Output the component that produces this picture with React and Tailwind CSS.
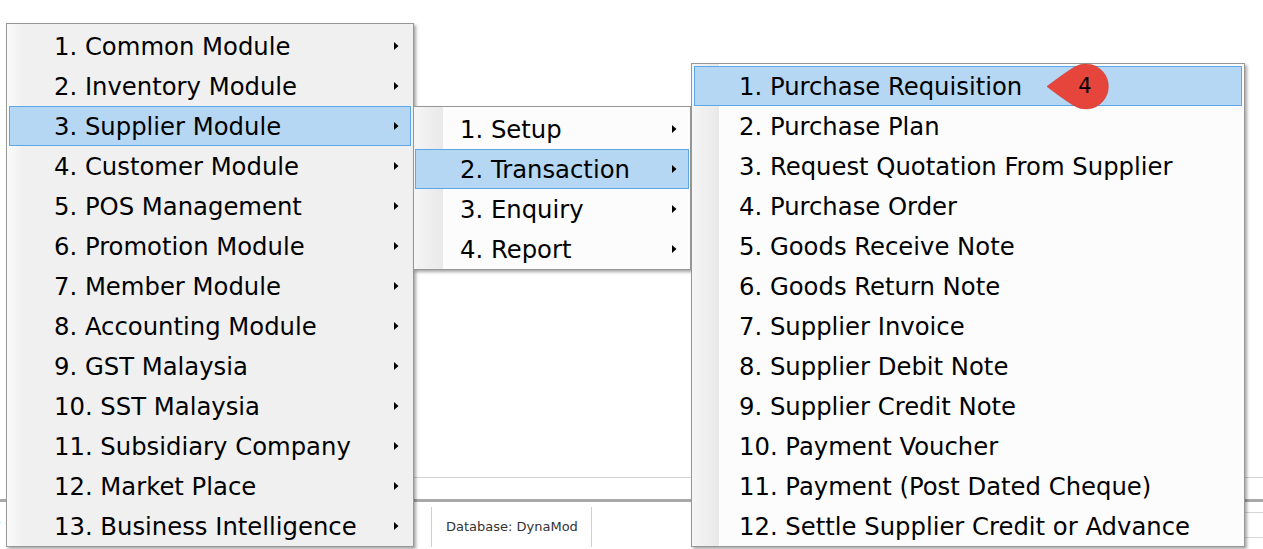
const mainItems = [
  '1. Common Module',
  '2. Inventory Module',
  '3. Supplier Module',
  '4. Customer Module',
  '5. POS Management',
  '6. Promotion Module',
  '7. Member Module',
  '8. Accounting Module',
  '9. GST Malaysia',
  '10. SST Malaysia',
  '11. Subsidiary Company',
  '12. Market Place',
  '13. Business Intelligence',
]

const supplierItems = ['1. Setup', '2. Transaction', '3. Enquiry', '4. Report']

const transactionItems = [
  '1. Purchase Requisition',
  '2. Purchase Plan',
  '3. Request Quotation From Supplier',
  '4. Purchase Order',
  '5. Goods Receive Note',
  '6. Goods Return Note',
  '7. Supplier Invoice',
  '8. Supplier Debit Note',
  '9. Supplier Credit Note',
  '10. Payment Voucher',
  '11. Payment (Post Dated Cheque)',
  '12. Settle Supplier Credit or Advance',
]

function Arrow() {
  return (
    <svg width="5" height="8" viewBox="0 0 5 8" className="shrink-0">
      <polygon points="0,0 4.5,4 0,8" fill="#000" />
    </svg>
  )
}

function Item({ label, active, arrow, mx }) {
  return (
    <div
      className={`h-[40px] flex items-center justify-between pl-[44px] pr-[11px] border ${mx} ${
        active ? 'bg-[#b5d7f3] border-[#5ea7e6]' : 'border-transparent'
      }`}
    >
      <span className="whitespace-nowrap text-[24.3px] leading-none pt-[2px] text-black">{label}</span>
      {arrow && <Arrow />}
    </div>
  )
}

function Badge() {
  return (
    <div className="absolute left-[354px] top-[-1px] w-[64px] h-[47px]">
      <svg width="64" height="47" viewBox="0 0 64 47" className="absolute inset-0">
        <path
          d="M1 23.5 Q 16 12 27 5 A 22.5 22.5 0 1 1 27 42 Q 16 35 1 23.5 Z"
          fill="#e6453b"
          stroke="#c93a31"
          strokeWidth="0.6"
        />
      </svg>
      <span className="absolute left-[29px] top-[11px] w-[20px] text-center text-[21px] leading-[24px] text-black">
        4
      </span>
    </div>
  )
}

export default function App() {
  return (
    <div
      className="relative w-[1263px] h-[549px] bg-white overflow-hidden"
      style={{ fontFamily: '"DejaVu Sans", Verdana, sans-serif' }}
    >
      {/* window behind the menus */}
      <div className="flex flex-col">
        <div className="h-[477px]" />
        <div className="ml-[400px] h-px bg-[#d2d2d2]" />
        <div className="h-[21px]" />
        <div className="h-[3px] bg-[#a9a9a9]" />
        <div className="flex h-[47px]">
          <div className="w-[431px] flex items-center">
            <span className="-ml-[7px] text-[14px] font-bold italic text-[#1f5cc6]">t</span>
          </div>
          <div className="mt-[5px] h-[40px] border-l border-[#cfcfcf] pl-[14px] w-[160px] flex items-center">
            <span className="text-[13px] text-[#333] whitespace-nowrap">Database: DynaMod</span>
          </div>
          <div className="mt-[5px] h-[40px] border-l border-[#cfcfcf] w-[110px]" />
          <div className="flex-1 flex flex-col">
            <div className="h-[10px]" />
            <div className="h-px bg-[#d6d6d6]" />
            <div className="h-[24px]" />
            <div className="h-px bg-[#d6d6d6]" />
          </div>
        </div>
      </div>

      {/* main menu */}
      <div className="absolute left-[6px] top-[23px] w-[408px] border border-[#979797] pt-[2px] bg-[linear-gradient(to_right,#fbfbfb,#f0f0f0_16px)] shadow-[2px_2px_3px_rgba(0,0,0,0.35)]">
        {mainItems.map((m, i) => (
          <Item key={m} label={m} active={i === 2} arrow mx="mx-[2px]" />
        ))}
      </div>

      {/* supplier submenu */}
      <div className="absolute left-[413px] top-[106px] w-[278px] border border-[#979797] pt-[2px] bg-[linear-gradient(to_right,#f5f5f5,#e9e9e9_29px,#fcfcfc_29px)] shadow-[2px_2px_3px_rgba(0,0,0,0.35)]">
        {supplierItems.map((m, i) => (
          <Item key={m} label={m} active={i === 1} arrow mx="mx-[1px]" />
        ))}
      </div>

      {/* transaction submenu */}
      <div className="absolute left-[691px] top-[63px] w-[554px] border border-[#979797] pt-[2px] bg-[linear-gradient(to_right,#f5f5f5,#e9e9e9_27px,#fcfcfc_27px)] shadow-[2px_2px_3px_rgba(0,0,0,0.35)]">
        {transactionItems.map((m, i) => (
          <Item key={m} label={m} active={i === 0} mx="mx-[2px]" />
        ))}
        <Badge />
      </div>
    </div>
  )
}
